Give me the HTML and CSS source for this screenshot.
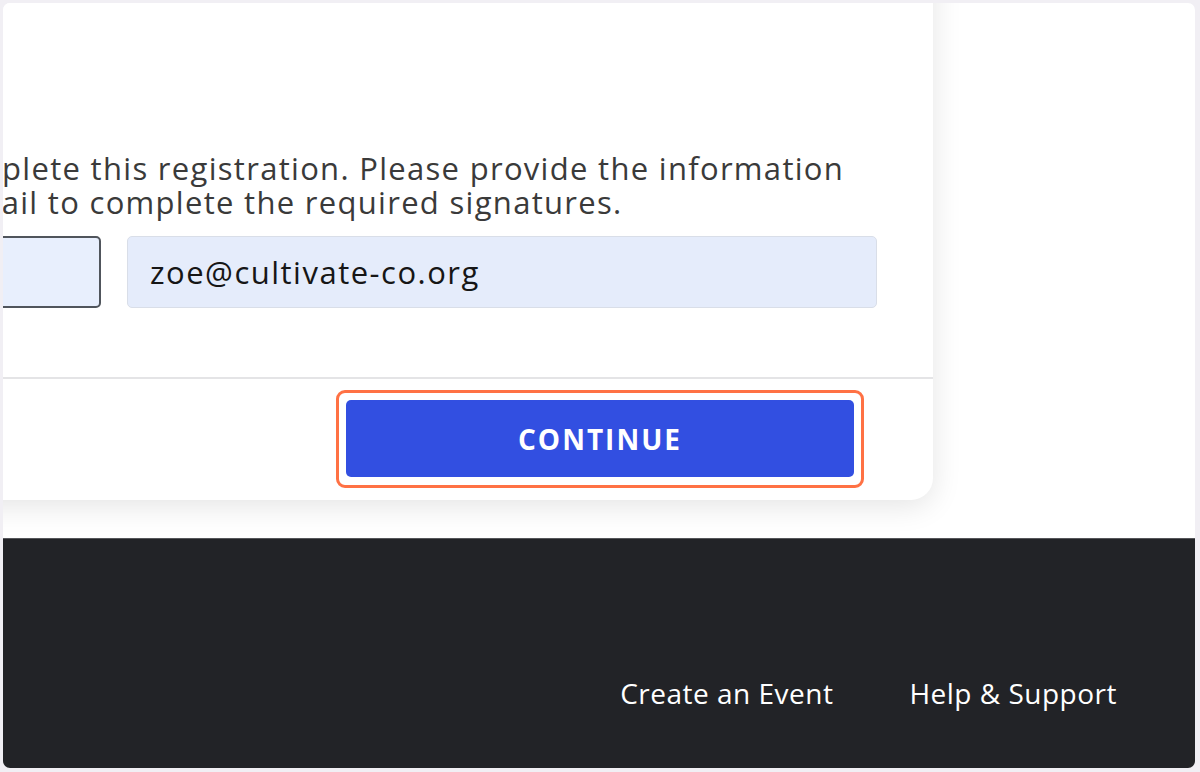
FILE: index.html
```html
<!DOCTYPE html>
<html lang="en">
<head>
    <meta charset="UTF-8">
    <meta name="viewport" content="width=device-width, initial-scale=1.0">
    <title>Registration - Signatures</title>
    <link rel="stylesheet" href="styles.css">
</head>
<body>
    <div class="frame">
        <div class="window">
            <main class="main">
                <div class="card">
                    <div class="card-body">
                        <p class="intro">complete this registration. Please provide the information<br>email to complete the required signatures.</p>
                        <div class="fields">
                            <input class="field field-name" type="text" value="">
                            <input class="field field-email" type="email" value="zoe@cultivate-co.org">
                        </div>
                    </div>
                    <div class="card-footer">
                        <div class="focus-ring">
                            <button class="continue">CONTINUE</button>
                        </div>
                    </div>
                </div>
            </main>
            <footer class="site-footer">
                <ul class="footer-links">
                    <li><a href="#">Create an Event</a></li>
                    <li><a href="#">Help &amp; Support</a></li>
                </ul>
            </footer>
        </div>
    </div>
</body>
</html>
```

FILE: styles.css
```css
body {
    margin: 0;
    padding: 0;
    height: 772px;
    overflow: hidden;
    background-color: #f1eff4;
    font-family: "Open Sans", "Noto Sans", sans-serif;
}

.frame {
    height: 100%;
    box-sizing: border-box;
    padding: 3px 5px 4px 3px;
}

.window {
    height: 100%;
    background-color: #fff;
    border-radius: 7px;
    overflow: hidden;
    display: flex;
    flex-direction: column;
}

.main {
    flex: 1;
}

/* the card is wider than the visible area, its left side is cut off */
.card {
    width: 1130px;
    margin-left: -200px;
    margin-top: -63px;
    background-color: #fff;
    border-radius: 22px;
    box-shadow: 0 6px 30px rgba(0, 0, 0, 0.11);
}

.card-body {
    padding: 211px 56px 69px 150px;
}

.intro {
    margin: 0 0 17px;
    font-size: 31px;
    line-height: 34px;
    letter-spacing: 1.3px;
    color: #3a3a3a;
    white-space: nowrap;
    text-indent: -17px;
}

.fields {
    display: flex;
    gap: 26px;
}

.field {
    box-sizing: border-box;
    height: 72px;
    border-radius: 5px;
    font-family: inherit;
    font-size: 31px;
    letter-spacing: 1.5px;
    color: #161616;
    outline: none;
}

.field-name {
    width: 148px;
    background-color: #e8effd;
    border: 2px solid #50555c;
}

.field-email {
    width: 750px;
    padding: 0 22px;
    background-color: #e5ecfb;
    border: 1px solid #d9dee8;
}

.card-footer {
    display: flex;
    justify-content: flex-end;
    border-top: 2px solid #e4e4e6;
    padding: 11px 69px 12px 0;
}

.focus-ring {
    border: 3px solid #ff7144;
    border-radius: 9px;
    padding: 7px 7px 8px;
}

.continue {
    display: block;
    width: 508px;
    height: 77px;
    border: none;
    border-radius: 5px;
    background-color: #324fe1;
    color: #fff;
    font-family: inherit;
    font-size: 28px;
    font-weight: 700;
    letter-spacing: 2px;
    cursor: pointer;
}

.site-footer {
    height: 230px;
    flex-shrink: 0;
    box-sizing: border-box;
    background-color: #222327;
    border-top: 1px solid #55565a;
    display: flex;
    align-items: center;
    justify-content: flex-end;
    padding: 0 78px 0 0;
}

.footer-links {
    display: flex;
    gap: 76px;
    margin: 0;
    padding: 0;
    list-style: none;
    position: relative;
    top: 39px;
}

.footer-links a {
    color: #fff;
    text-decoration: none;
    font-size: 28px;
    font-weight: 500;
    letter-spacing: 0.5px;
}
```
